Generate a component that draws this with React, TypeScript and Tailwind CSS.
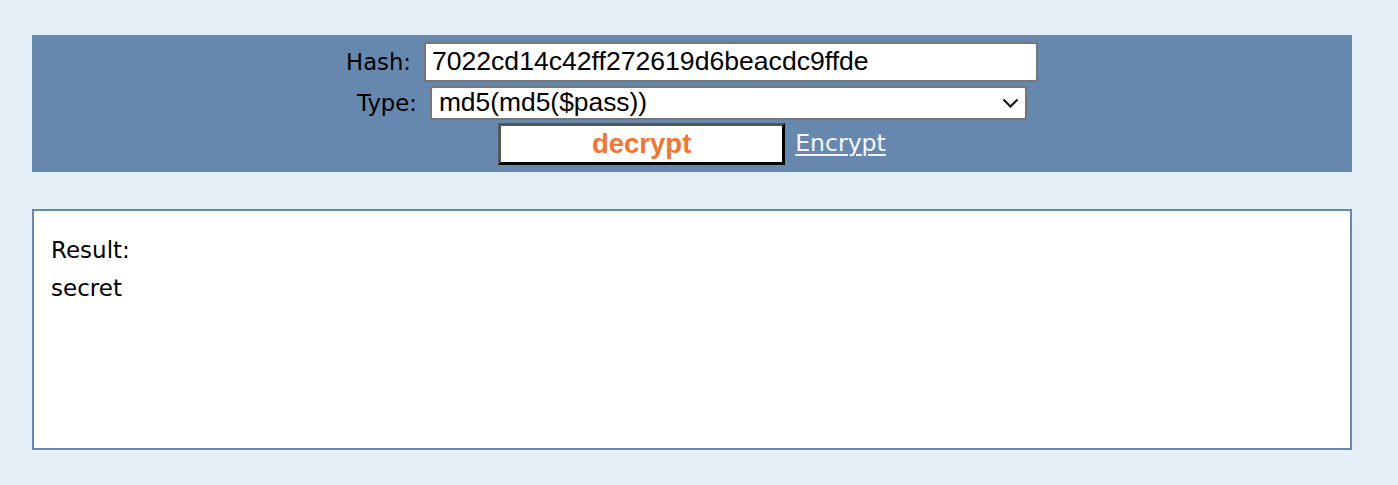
import React from 'react';

const App: React.FC = () => {
  return (
    <div className="min-h-[485px] w-full bg-[#e4eef6] pt-[35px] pb-[35px] font-['DejaVu_Sans',Verdana,sans-serif]">
      {/* Form panel */}
      <div className="ml-[32px] w-[1320px] bg-[#6788ae] pt-[7px] pb-[7px] flex flex-col items-center">
        <div className="flex items-center gap-[13px]">
          <span className="text-[22.7px] text-black">Hash:</span>
          <div className="w-[614px] h-[40px] bg-white border-2 border-[#767676] rounded-[3px] flex items-center pl-[6px] text-[26.6px] text-black font-['Liberation_Sans',Arial,sans-serif]">
            7022cd14c42ff272619d6beacdc9ffde
          </div>
        </div>

        <div className="mt-[4px] flex items-center gap-[13px]">
          <span className="text-[22.7px] text-black">Type:</span>
          <div className="w-[597px] h-[34px] bg-white border-2 border-[#767676] rounded-[3px] flex items-center justify-between pl-[7px] pr-[6px] text-[26.4px] text-black font-['Liberation_Sans',Arial,sans-serif]">
            <span>md5(md5($pass))</span>
            <svg width="17" height="10" viewBox="0 0 17 10" fill="none">
              <path d="M1.5 1.5 L8.5 8.5 L15.5 1.5" stroke="#1a1a1a" strokeWidth="2.2" />
            </svg>
          </div>
        </div>

        <div className="mt-[3px] flex items-center gap-[10px]">
          <button className="w-[287px] h-[42px] bg-white border-[3px] border-t-[#555555] border-l-[#555555] border-b-black border-r-black text-[#f07634] font-bold text-[27.5px] leading-none flex items-center justify-center font-['Liberation_Sans',Arial,sans-serif]">
            decrypt
          </button>
          <a
            href="#"
            className="text-[23.6px] text-[#f4f7ff] underline underline-offset-[3px] decoration-[2px]"
          >
            Encrypt
          </a>
        </div>
      </div>

      {/* Result box */}
      <div className="ml-[32px] mt-[37px] w-[1320px] h-[241px] bg-white border-2 border-[#6788ae] pl-[17px] pt-[20px] text-[23px] leading-[38px] text-black">
        <div>Result:</div>
        <div>secret</div>
      </div>
    </div>
  );
};

export default App;
